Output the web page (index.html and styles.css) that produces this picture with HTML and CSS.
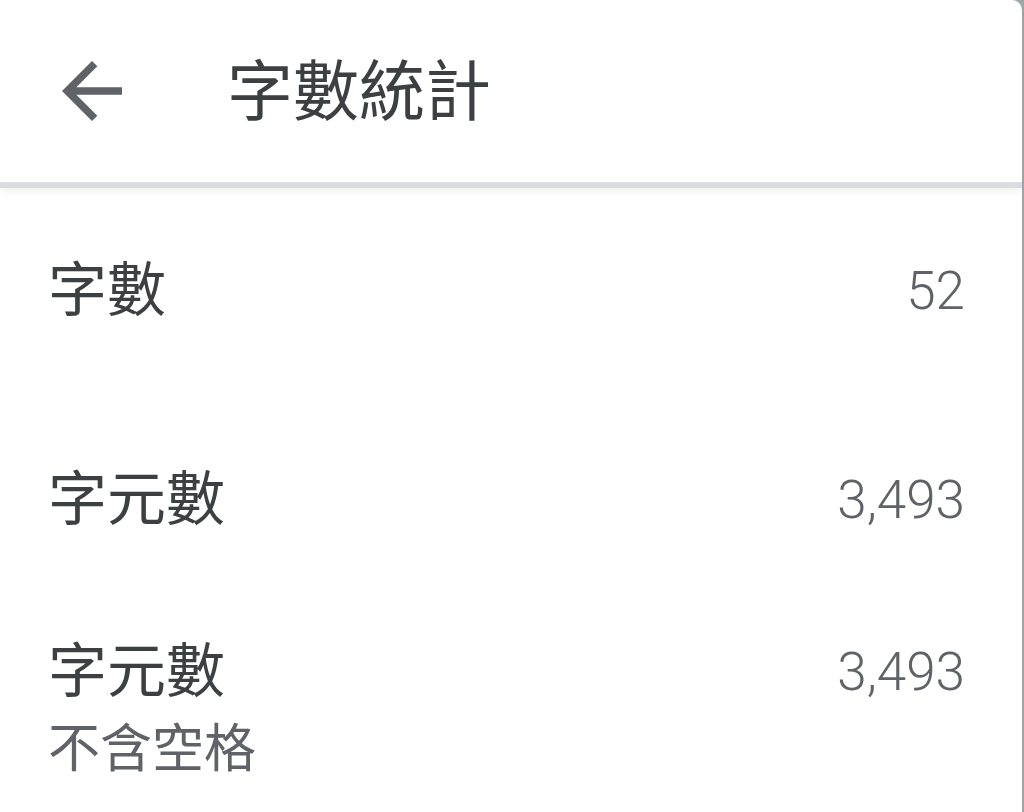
FILE: index.html
```html
<!DOCTYPE html>
<html lang="zh-Hant">
<head>
    <meta charset="UTF-8">
    <meta name="viewport" content="width=device-width, initial-scale=1.0">
    <title>字數統計</title>
    <link rel="stylesheet" href="styles.css">
</head>
<body>
    <div class="panel">
        <div class="header">
            <button class="back" aria-label="返回">
                <svg viewBox="0 0 24 24" width="90" height="90">
                    <path d="M20 11H7.83l5.59-5.59L12 4l-8 8 8 8 1.41-1.41L7.83 13H20v-2z" fill="#5f6368"/>
                </svg>
            </button>
            <h1>字數統計</h1>
        </div>

        <div class="stats">
            <div class="row row-words">
                <div class="label">字數</div>
                <div class="value">52</div>
            </div>
            <div class="row row-chars">
                <div class="label">字元數</div>
                <div class="value">3,493</div>
            </div>
            <div class="row">
                <div>
                    <div class="label">字元數</div>
                    <div class="sub">不含空格</div>
                </div>
                <div class="value">3,493</div>
            </div>
        </div>
    </div>
</body>
</html>
```

FILE: styles.css
```css
body {
    margin: 0;
    background: #a2a6ab;
    font-family: Roboto, "Noto Sans CJK TC", sans-serif;
    overflow: hidden;
}
.panel {
    width: 1022px;
    height: 812px;
    background: #ffffff;
    border-top-right-radius: 10px;
}
.header {
    height: 182px;
    display: flex;
    align-items: center;
    border-bottom: 6px solid #dadce0;
    box-shadow: 0 4px 8px rgba(0,0,0,0.05);
    padding-left: 47px;
}
.back {
    border: none;
    background: none;
    padding: 0;
    width: 90px;
    height: 90px;
    display: flex;
}
.header h1 {
    margin: 4px 0 0 90px;
    font-size: 66px;
    font-weight: 400;
    color: #3c4043;
    line-height: 80px;
}
.stats {
    padding: 68px 57px 0 48px;
}
.row {
    display: flex;
    justify-content: space-between;
    align-items: flex-start;
}
.row-words {
    margin-bottom: 139px;
}
.row-chars {
    margin-bottom: 102px;
}
.label {
    font-size: 59px;
    line-height: 70px;
    color: #3c4043;
}
.sub {
    font-size: 52px;
    line-height: 60px;
    margin-top: 13px;
    color: #5f6368;
}
.value {
    font-size: 53px;
    line-height: 70px;
    font-weight: 300;
    color: #5f6368;
}
```
